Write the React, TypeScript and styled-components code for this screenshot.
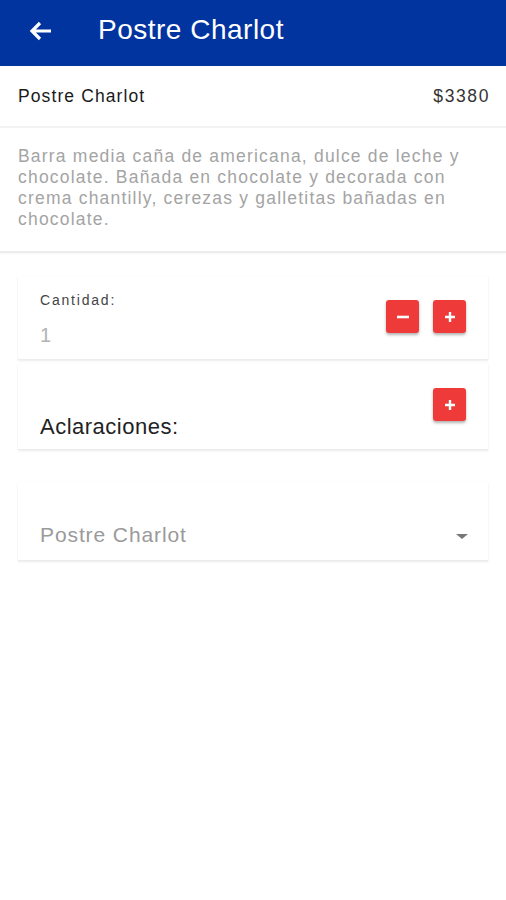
import React from "react";
import styled, { createGlobalStyle } from "styled-components";

const Global = createGlobalStyle`
  html, body { margin: 0; padding: 0; background: #ffffff; }
  body { font-family: "Liberation Sans", Arial, sans-serif; }
`;

const Page = styled.div`
  width: 506px;
  min-height: 900px;
  background: #fff;
  display: flex;
  flex-direction: column;
`;

const Header = styled.header`
  height: 66px;
  background: #0234a0;
  display: flex;
  align-items: center;
  padding: 0 0 7px 27px;
  box-sizing: border-box;
  gap: 45px;
`;

const BackBtn = styled.div`
  width: 26px;
  height: 26px;
  display: flex;
  align-items: center;
  justify-content: center;
  margin-top: 3px;
`;

const Title = styled.h1`
  margin: 0;
  color: #fff;
  font-size: 28px;
  font-weight: 400;
  letter-spacing: 0.5px;
`;

const ItemRow = styled.div`
  display: flex;
  justify-content: space-between;
  align-items: center;
  height: 60px;
  padding: 0 17px 0 18px;
  border-bottom: 2px solid #f2f2f2;
  font-size: 17.5px;
  letter-spacing: 1.1px;
  color: #1a1a1a;
`;

const Price = styled.span`
  color: #333;
  letter-spacing: 1.6px;
  margin-right: -1px;
`;

const Description = styled.p`
  margin: 0;
  padding: 18px 24px 21px 18px;
  font-size: 17.5px;
  line-height: 21px;
  letter-spacing: 1.2px;
  color: #a4a4a4;
  border-bottom: 2px solid #ececec;
  box-shadow: 0 1px 2px rgba(0,0,0,0.04);
`;

const Cards = styled.div`
  display: flex;
  flex-direction: column;
  padding: 23px 18px 0 18px;
  gap: 4px;
`;

const Card = styled.div<{ $h: number; $mt?: number }>`
  height: ${(p) => p.$h}px;
  margin-top: ${(p) => p.$mt ?? 0}px;
  background: #fff;
  box-shadow: 0 1px 2px rgba(0,0,0,0.08), 0 0 1px rgba(0,0,0,0.04);
  border-bottom: 1px solid #ececec;
  display: flex;
  justify-content: space-between;
  padding: 0 22px;
  box-sizing: border-box;
`;

const Field = styled.div`
  display: flex;
  flex-direction: column;
`;

const SmallLabel = styled.span`
  font-size: 14px;
  letter-spacing: 1.8px;
  color: #444;
  margin-top: 16px;
`;

const Qty = styled.span`
  font-size: 20px;
  color: #b3b3b3;
  margin-top: 16px;
`;

const BigLabel = styled.span`
  font-size: 22px;
  letter-spacing: 0.5px;
  color: #222;
  align-self: flex-end;
  margin-bottom: 9px;
`;

const Buttons = styled.div<{ $mt: number }>`
  display: flex;
  gap: 14px;
  margin-top: ${(p) => p.$mt}px;
`;

const RedBtn = styled.button`
  width: 33px;
  height: 33px;
  border: none;
  border-radius: 3px;
  background: #ef3a3a;
  box-shadow: 0 2px 3px rgba(0,0,0,0.3);
  display: flex;
  align-items: center;
  justify-content: center;
  padding: 0;
`;

const SelectText = styled.span`
  font-size: 21px;
  letter-spacing: 0.9px;
  color: #9a9a9a;
  align-self: flex-end;
  margin-bottom: 13px;
`;

const Caret = styled.div`
  align-self: flex-end;
  margin-bottom: 21px;
  width: 0;
  height: 0;
  border-left: 6px solid transparent;
  border-right: 6px solid transparent;
  border-top: 5px solid #777;
  margin-right: -2px;
`;

const Plus = () => (
  <svg width="14" height="14" viewBox="0 0 14 14">
    <path d="M7 2v10M2 7h10" stroke="#fff" strokeWidth="2.4" />
  </svg>
);
const Minus = () => (
  <svg width="14" height="14" viewBox="0 0 14 14">
    <path d="M1 7h12" stroke="#fff" strokeWidth="2.6" />
  </svg>
);

export default function App() {
  return (
    <Page>
      <Global />
      <Header>
        <BackBtn>
          <svg width="26" height="24" viewBox="0 0 26 24">
            <path d="M24 12H5M13 4l-8 8 8 8" stroke="#fff" strokeWidth="3.2" fill="none" />
          </svg>
        </BackBtn>
        <Title>Postre Charlot</Title>
      </Header>
      <ItemRow>
        <span>Postre Charlot</span>
        <Price>$3380</Price>
      </ItemRow>
      <Description>
        Barra media caña de americana, dulce de leche y chocolate. Bañada en chocolate y decorada con crema chantilly, cerezas y galletitas bañadas en chocolate.
      </Description>
      <Cards>
        <Card $h={84}>
          <Field>
            <SmallLabel>Cantidad:</SmallLabel>
            <Qty>1</Qty>
          </Field>
          <Buttons $mt={24}>
            <RedBtn><Minus /></RedBtn>
            <RedBtn><Plus /></RedBtn>
          </Buttons>
        </Card>
        <Card $h={86}>
          <BigLabel>Aclaraciones:</BigLabel>
          <Buttons $mt={24}>
            <RedBtn><Plus /></RedBtn>
          </Buttons>
        </Card>
        <Card $h={79} $mt={28}>
          <SelectText>Postre Charlot</SelectText>
          <Caret />
        </Card>
      </Cards>
    </Page>
  );
}
